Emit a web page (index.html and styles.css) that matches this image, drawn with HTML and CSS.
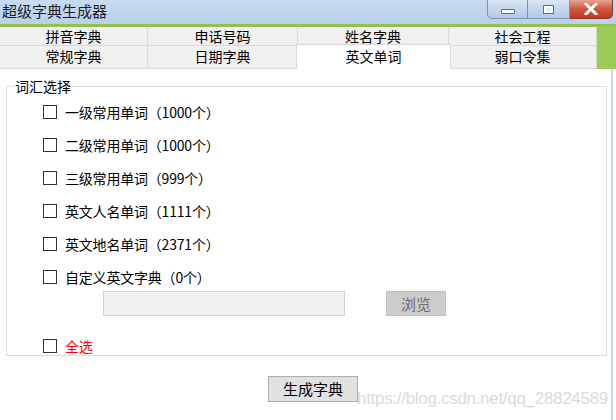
FILE: index.html
```html
<!DOCTYPE html>
<html lang="zh-CN">
<head>
    <meta charset="UTF-8">
    <title>超级字典生成器</title>
    <link rel="stylesheet" href="styles.css">
</head>
<body>
    <div class="window">
        <div class="titlebar">
            <div class="title">超级字典生成器</div>
            <div class="caption">
                <div class="cap-btn min"><span class="glyph-min"></span></div>
                <div class="cap-btn max"><span class="glyph-max"></span></div>
                <div class="cap-btn close">
                    <svg width="16" height="12" viewBox="0 0 16 12">
                        <path d="M3 1 L13 11 M13 1 L3 11" stroke="#ffffff" stroke-width="3" stroke-linecap="square"/>
                    </svg>
                </div>
            </div>
        </div>

        <div class="tab-strip">
            <div class="tabs">
                <div class="tab">拼音字典</div>
                <div class="tab">申话号码</div>
                <div class="tab">姓名字典</div>
                <div class="tab">社会工程</div>
                <div class="tab row2">常规字典</div>
                <div class="tab row2">日期字典</div>
                <div class="tab row2 active">英文单词</div>
                <div class="tab row2">弱口令集</div>
            </div>
            <div class="filler"></div>
        </div>

        <div class="panel">
            <fieldset class="group">
                <legend>词汇选择</legend>
                <div class="options">
                    <div class="option"><span class="box"></span>一级常用单词（1000个）</div>
                    <div class="option"><span class="box"></span>二级常用单词（1000个）</div>
                    <div class="option"><span class="box"></span>三级常用单词（999个）</div>
                    <div class="option"><span class="box"></span>英文人名单词（1111个）</div>
                    <div class="option"><span class="box"></span>英文地名单词（2371个）</div>
                    <div class="option"><span class="box"></span>自定义英文字典（0个）</div>
                </div>
                <div class="path-row">
                    <div class="path-input"></div>
                    <div class="browse">浏览</div>
                </div>
                <div class="option select-all"><span class="box"></span>全选</div>
            </fieldset>

            <div class="actions">
                <div class="generate">生成字典</div>
            </div>

            <div class="watermark">https://blog.csdn.net/qq_28824589</div>
        </div>
    </div>
</body>
</html>
```

FILE: styles.css
```css
* {
    margin: 0;
    padding: 0;
    box-sizing: border-box;
}

body {
    width: 616px;
    height: 420px;
    overflow: hidden;
    background: #ffffff;
    font-family: 'Noto Sans CJK SC', 'Noto Sans', sans-serif;
    font-size: 14px;
    color: #000000;
}

.window {
    width: 616px;
    height: 420px;
    display: flex;
    flex-direction: column;
    position: relative;
}

.titlebar {
    height: 27px;
    background: linear-gradient(180deg, #c7dbf0 0%, #b8d0ea 100%);
    display: flex;
    justify-content: space-between;
    align-items: flex-start;
    border-bottom: 3px solid #93c050;
}

.title {
    font-size: 15px;
    line-height: 22px;
    padding-left: 2px;
    color: #1b1b1b;
}

.caption {
    display: flex;
    padding-right: 3px;
}

.cap-btn {
    height: 19px;
    border: 1px solid #7b93b3;
    border-top: none;
    display: flex;
    align-items: center;
    justify-content: center;
    background: linear-gradient(180deg, #dbe7f4 0%, #c3d5ea 55%, #b4c9e2 100%);
}

.cap-btn.min {
    width: 41px;
    border-radius: 0 0 0 5px;
}

.cap-btn.max {
    width: 42px;
    border-left: none;
}

.cap-btn.close {
    width: 43px;
    border-color: #8a3a2c;
    border-left: none;
    border-radius: 0 0 5px 0;
    background: linear-gradient(180deg, #e3a494 0%, #d2553c 50%, #c0391f 100%);
}

.glyph-min {
    width: 14px;
    height: 5px;
    background: #f4f7fb;
    border: 1px solid #5d6f86;
    border-radius: 1px;
    margin-top: 5px;
}

.glyph-max {
    width: 11px;
    height: 9px;
    border: 1px solid #5d6f86;
    background: #dfe8f3;
    box-shadow: inset 0 0 0 2px #f4f7fb;
}

.tab-strip {
    height: 42px;
    display: flex;
    background: #9ccb58;
}

.tabs {
    width: 597px;
    display: grid;
    grid-template-columns: 148px 150px 151px 148px;
    grid-template-rows: 19px 23px;
    background: #f0f0f0;
}

.tab {
    background: #f0f0f0;
    border-right: 1px solid #d9d9d9;
    border-bottom: 1px solid #d9d9d9;
    text-align: center;
    line-height: 18px;
}

.tab.row2 {
    line-height: 20px;
}

.tab.active {
    background: #ffffff;
    border: 1px solid #d9d9d9;
    border-bottom: none;
    margin: -2px -2px 0 -2px;
    position: relative;
    line-height: 22px;
}

.filler {
    flex: 1;
    background: #9ccb58;
}

.panel {
    flex: 1;
    position: relative;
    border-right: 2px solid #c8dbef;
    margin-right: 3px;
    padding: 9px 0 0 6px;
}

.group {
    width: 601px;
    height: 278px;
    border: 1px solid #dcdcdc;
    padding: 0 0 0 36px;
}

.group legend {
    margin-left: -29px;
    padding: 0 1px;
    line-height: 16px;
    font-size: 14px;
}

.options {
    display: flex;
    flex-direction: column;
    gap: 5px;
    padding-top: 4px;
}

.option {
    height: 28px;
    display: flex;
    align-items: center;
    gap: 8px;
    letter-spacing: -0.2px;
}

.box {
    width: 14px;
    height: 14px;
    border: 1px solid #333333;
    background: #ffffff;
    flex-shrink: 0;
}

.path-row {
    display: flex;
    align-items: center;
    margin-top: -1px;
    padding-left: 60px;
    height: 26px;
}

.path-input {
    width: 242px;
    height: 25px;
    background: #f0f0f0;
    border: 1px solid #d2d2d2;
}

.browse {
    margin-left: 41px;
    width: 60px;
    height: 25px;
    background: #cccccc;
    border: 1px solid #bfbfbf;
    color: #6d6d6d;
    font-size: 15px;
    text-align: center;
    line-height: 23px;
}

.select-all {
    height: 16px;
    margin-top: 22px;
    color: #ff0000;
}

.actions {
    display: flex;
    padding: 20px 0 0 262px;
}

.generate {
    width: 90px;
    height: 26px;
    background: #e1e1e1;
    border: 1px solid #adadad;
    text-align: center;
    font-size: 15px;
    line-height: 24px;
}

.watermark {
    position: absolute;
    left: 357px;
    top: 320px;
    font-family: 'Liberation Sans', Arial, sans-serif;
    font-size: 17px;
    color: #dadada;
    letter-spacing: -0.3px;
}
```
